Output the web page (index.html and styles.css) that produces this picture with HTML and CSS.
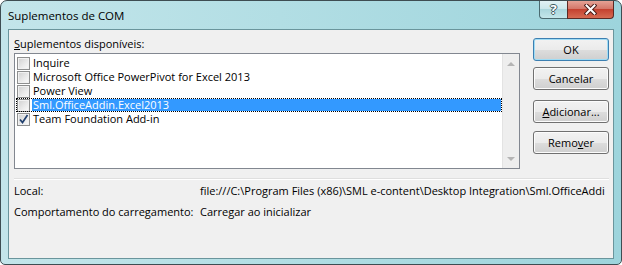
FILE: index.html
```html
<!DOCTYPE html>
<html lang="pt-br">

<head>
    <meta charset="UTF-8" />
    <title>Suplementos de COM</title>
    <link rel="stylesheet" href="styles.css">
</head>

<body>
    <div class="window">
        <!-- Barra de título -->
        <div class="titlebar">
            <span class="title">Suplementos de COM</span>
            <div class="caption-buttons">
                <div class="cap help">?</div>
                <div class="cap close">
                    <svg width="13" height="11" viewBox="0 0 13 11">
                        <path d="M2.5 1.5 L10.5 9.5 M10.5 1.5 L2.5 9.5" stroke="#4a1d18" stroke-width="4" stroke-linecap="square" fill="none" />
                        <path d="M2.5 1.5 L10.5 9.5 M10.5 1.5 L2.5 9.5" stroke="#fff" stroke-width="2" stroke-linecap="square" fill="none" />
                    </svg>
                </div>
            </div>
        </div>

        <div class="client">
            <div class="top">
                <div class="list-area">
                    <div class="list-label"><u>S</u>uplementos disponíveis:</div>
                    <div class="listbox">
                        <ul class="items">
                            <li><span class="check"></span><span class="name">Inquire</span></li>
                            <li><span class="check"></span><span class="name">Microsoft Office PowerPivot for Excel 2013</span></li>
                            <li><span class="check"></span><span class="name">Power View</span></li>
                            <li class="selected"><span class="check"></span><span class="name">Sml.OfficeAddin.Excel2013</span></li>
                            <li>
                                <span class="check">
                                    <svg width="11" height="11" viewBox="0 0 11 11">
                                        <path d="M2 5.5 L4.5 8.5 L9.5 1" stroke="#21406e" stroke-width="1.7" fill="none" />
                                    </svg>
                                </span>
                                <span class="name">Team Foundation Add-in</span>
                            </li>
                        </ul>
                        <div class="scrollbar">
                            <span class="arrow up"></span>
                            <span class="arrow down"></span>
                        </div>
                    </div>
                </div>

                <div class="buttons">
                    <button class="btn default ok">OK</button>
                    <button class="btn cancel">Cancelar</button>
                    <button class="btn add"><u>A</u>dicionar...</button>
                    <button class="btn remove">Remo<u>v</u>er</button>
                </div>
            </div>

            <div class="separator"></div>

            <!-- Detalhes do suplemento -->
            <div class="info">
                <span>Local:</span>
                <span class="value">file:///C:\Program Files (x86)\SML e-content\Desktop Integration\Sml.OfficeAddi</span>
                <span>Comportamento do carregamento:</span>
                <span class="value">Carregar ao inicializar</span>
            </div>
        </div>
    </div>
</body>

</html>
```

FILE: styles.css
```css
body {
    margin: 0;
    background: #fff;
    font-family: 'Open Sans', 'Noto Sans', sans-serif;
    font-size: 11px;
    color: #000;
}

.window {
    width: 622px;
    height: 265px;
    box-sizing: border-box;
    border: 1px solid #3e4d52;
    border-radius: 7px 7px 5px 5px;
    background: linear-gradient(90deg, #c3e5ea 0%, #b2dee4 45%, #9dd4dc 100%);
    padding: 0 7px 5px;
    display: flex;
    flex-direction: column;
    overflow: hidden;
}

.titlebar {
    height: 28px;
    display: flex;
    justify-content: space-between;
    flex-shrink: 0;
}

.title {
    padding-top: 7px;
    font-size: 11.5px;
    line-height: 15px;
}

.caption-buttons {
    display: flex;
    height: 19px;
    margin-top: -1px;
}

.cap {
    height: 19px;
    box-sizing: border-box;
    border: 1px solid #4b6a70;
    border-top: none;
    display: flex;
    align-items: center;
    justify-content: center;
}

.help {
    width: 28px;
    border-right: none;
    border-radius: 0 0 0 4px;
    background: linear-gradient(#e4f3f5 0%, #cbe7eb 50%, #aad6dc 51%, #c4e6ea 100%);
    color: #fff;
    font-weight: bold;
    font-size: 13px;
    text-shadow: 1px 0 0 #3d5a60, -1px 0 0 #3d5a60, 0 1px 0 #3d5a60, 0 -1px 0 #3d5a60;
}

.close {
    width: 47px;
    border-color: #5b2a24;
    border-radius: 0 0 4px 0;
    background: linear-gradient(#e7a79a 0%, #d4786a 48%, #c4412f 52%, #d66b52 100%);
}

.client {
    flex: 1;
    border: 1px solid #6a959c;
    background: #f0f0f0;
    padding: 6px 4px 0 5px;
    display: flex;
    flex-direction: column;
}

.top {
    display: flex;
    gap: 13px;
}

.list-area {
    width: 506px;
}

.list-label {
    line-height: 15px;
    margin-bottom: 2px;
}

.listbox {
    height: 116px;
    box-sizing: border-box;
    border: 1px solid #828790;
    background: #fff;
    display: flex;
}

.items {
    flex: 1;
    list-style: none;
    margin: 0;
    padding: 2px 0 0 1px;
}

.items li {
    height: 14px;
    display: flex;
    align-items: center;
    gap: 2px;
    padding-left: 1px;
    box-sizing: border-box;
}

.check {
    width: 13px;
    height: 13px;
    box-sizing: border-box;
    border: 1px solid #8e8f8f;
    background: linear-gradient(135deg, #cfcfcf 0%, #e9e9e9 55%, #fbfbfb 100%);
    box-shadow: inset 0 0 0 1px #f1f1f1;
    display: flex;
    align-items: center;
    justify-content: center;
    flex-shrink: 0;
}

.name {
    padding: 0 2px 0 1px;
    line-height: 14px;
}

.selected {
    outline: 1px dotted #000;
    outline-offset: -1px;
}

.selected .name {
    flex: 1;
    background: #3399ff;
    color: #fff;
    height: 12px;
    line-height: 12px;
    margin-right: 1px;
}

.scrollbar {
    width: 17px;
    background: #eeeeee;
    border-left: 1px solid #e3e3e3;
    display: flex;
    flex-direction: column;
    justify-content: space-between;
    align-items: center;
    padding: 8px 0 7px;
    box-sizing: border-box;
}

.arrow {
    width: 0;
    height: 0;
    border-left: 4px solid transparent;
    border-right: 4px solid transparent;
}

.arrow.up {
    border-bottom: 4px solid #b4b4b4;
}

.arrow.down {
    border-top: 4px solid #b4b4b4;
}

.buttons {
    display: flex;
    flex-direction: column;
    width: 76px;
    padding-top: 2px;
}

.btn {
    height: 23px;
    box-sizing: border-box;
    border: 1px solid #707070;
    border-radius: 3px;
    background: linear-gradient(#f2f2f2 0%, #ebebeb 50%, #dddddd 51%, #cfcfcf 100%);
    box-shadow: inset 0 0 0 1px #fcfcfc;
    font-family: inherit;
    font-size: 11px;
    color: #000;
    padding: 0;
}

.btn.default {
    border-color: #3c7fb1;
    box-shadow: inset 0 0 0 1px #9fdcf5;
}

.cancel {
    margin-top: 6px;
}

.add {
    margin-top: 10px;
}

.remove {
    margin-top: 8px;
}

.separator {
    margin-top: 9px;
    border-top: 1px solid #dfdfdf;
    border-bottom: 1px solid #fff;
}

.info {
    display: grid;
    grid-template-columns: 186px 1fr;
    row-gap: 6px;
    margin-top: 3px;
    line-height: 15px;
}

.value {
    white-space: nowrap;
}
```
